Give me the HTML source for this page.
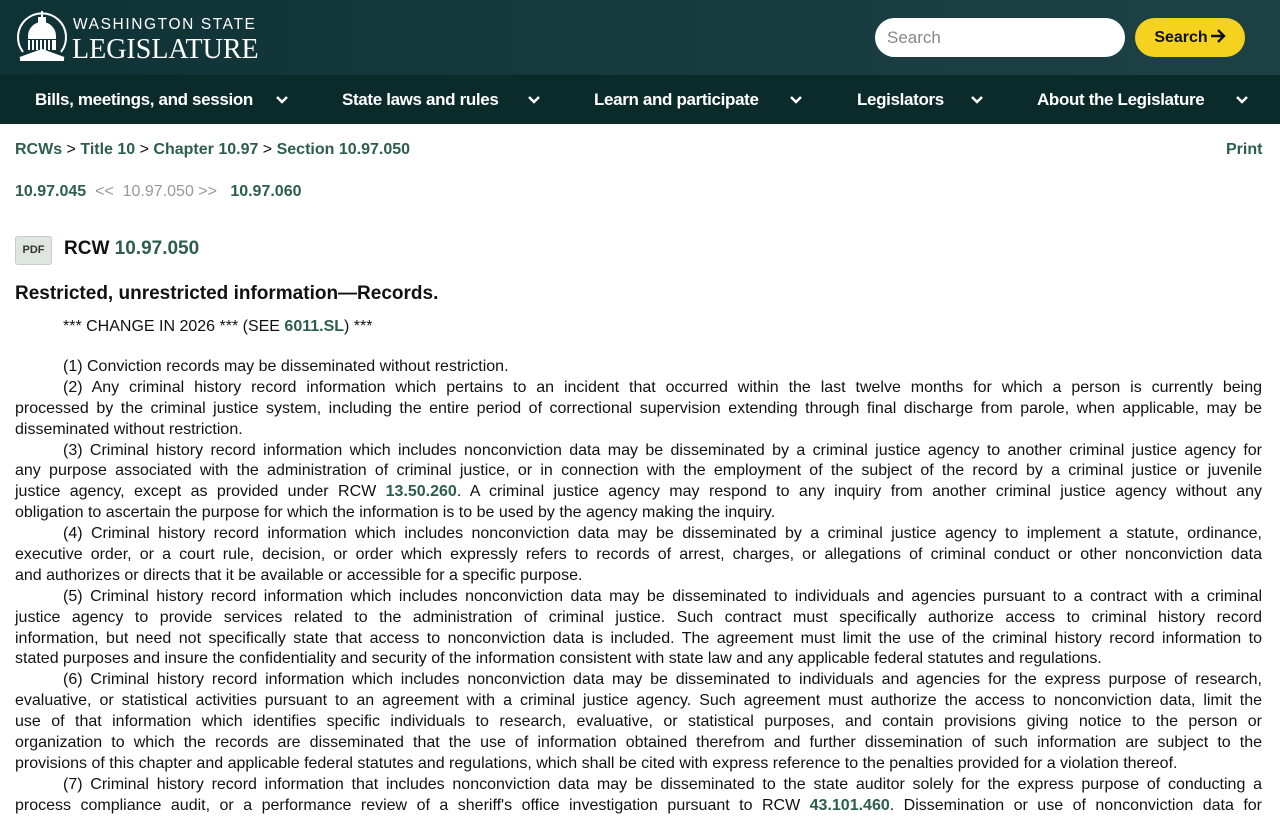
<!DOCTYPE html>
<html><head><meta charset="utf-8"><style>
body{margin:0;width:1280px;height:800px;overflow:hidden;background:#fff;font-family:"Liberation Sans",sans-serif;color:#111}
.top{height:75px;background:linear-gradient(90deg,#0f3335,#1d4145);position:relative}
.nav{height:49px;background:#0b2a2a;position:relative;color:#fff;font-weight:bold;font-size:17px;letter-spacing:-0.35px}
.nav span{position:absolute;top:15px}
.nav svg{position:absolute;top:20px}
.logo1{position:absolute;left:73px;top:16px;color:#fff;font-size:15.5px;letter-spacing:1.6px}
.logo2{position:absolute;left:72px;top:34px;color:#fff;font-family:"Liberation Serif",serif;font-size:28px;letter-spacing:0}
.search{position:absolute;left:875px;top:18px;width:250px;height:39px;background:#fff;border-radius:20px;color:#888;font-size:17px;line-height:39px;box-sizing:border-box;padding-left:12px}
.btn{position:absolute;left:1135px;top:18px;width:110px;height:39px;background:#f5d21f;border-radius:20px;font-weight:bold;font-size:16px;line-height:40px;text-align:center;color:#111}
a,.g{color:#2d5e4c;font-weight:bold;text-decoration:none}
.abs{position:absolute}
.body{position:absolute;left:15px;top:357px;width:1247px;font-size:16px;line-height:20.9px;color:#111}
.l{white-space:nowrap;text-align:justify;text-align-last:justify;height:20.9px;overflow:visible}
.e{text-align-last:left}
.i{padding-left:48px}
</style></head><body>
<div class="top">
<svg class="abs" style="left:14px;top:8px" width="56" height="56" viewBox="0 0 56 56" fill="none" stroke="#fff" stroke-width="2">
<path d="M9 44 A24 24 0 1 1 47 44"/>
<path d="M28 3v7M25 10h6v4h-6zM15 28a13 13 0 0 1 26 0z" fill="#fff"/>
<path d="M14 30h28M15 32v10M19 32v10M23 32v10M27 32v10M31 32v10M35 32v10M39 32v10M41 32v10"/>
<path d="M6 50l22-8 22 8z M6 52h44" fill="#fff"/>
</svg>
<div class="logo1">WASHINGTON STATE</div>
<div class="logo2">LEGISLATURE</div>
<div class="search">Search</div>
<div class="btn">Search<svg width="16" height="14" viewBox="0 0 16 14" style="vertical-align:-1px;margin-left:2px"><path d="M1 7h13M8 1l6 6-6 6" stroke="#111" stroke-width="2.4" fill="none"/></svg></div>
</div>
<div class="nav">
<span style="left:35px">Bills, meetings, and session</span>
<svg style="left:275px" width="14" height="10" viewBox="0 0 14 10"><path d="M2 2l5 5 5-5" stroke="#fff" stroke-width="2.5" fill="none"/></svg>
<span style="left:342px">State laws and rules</span>
<svg style="left:527px" width="14" height="10" viewBox="0 0 14 10"><path d="M2 2l5 5 5-5" stroke="#fff" stroke-width="2.5" fill="none"/></svg>
<span style="left:594px">Learn and participate</span>
<svg style="left:789px" width="14" height="10" viewBox="0 0 14 10"><path d="M2 2l5 5 5-5" stroke="#fff" stroke-width="2.5" fill="none"/></svg>
<span style="left:857px">Legislators</span>
<svg style="left:970px" width="14" height="10" viewBox="0 0 14 10"><path d="M2 2l5 5 5-5" stroke="#fff" stroke-width="2.5" fill="none"/></svg>
<span style="left:1037px">About the Legislature</span>
<svg style="left:1235px" width="14" height="10" viewBox="0 0 14 10"><path d="M2 2l5 5 5-5" stroke="#fff" stroke-width="2.5" fill="none"/></svg>
</div>
<div class="abs" style="left:15px;top:141px;font-size:16px"><a>RCWs</a> &gt; <a>Title 10</a> &gt; <a>Chapter 10.97</a> &gt; <a>Section 10.97.050</a></div>
<div class="abs" style="left:1226px;top:141px;font-size:16px"><a>Print</a></div>
<div class="abs" style="left:15px;top:183px;font-size:16px;color:#999"><a>10.97.045</a> &nbsp;&lt;&lt; &nbsp;10.97.050 &gt;&gt; &nbsp; <a>10.97.060</a></div>
<div class="abs" style="left:15px;top:236px;width:37px;height:29px;background:#dfe6e0;border:1px solid #c5cfc8;border-radius:3px;box-sizing:border-box;font-size:11px;font-weight:bold;color:#333;text-align:center;line-height:27px">PDF</div>
<div class="abs" style="left:64px;top:238px;font-size:19px;font-weight:bold">RCW <span class="g">10.97.050</span></div>
<div class="abs" style="left:15px;top:283px;font-size:19px;font-weight:bold">Restricted, unrestricted information—Records.</div>
<div class="abs" style="left:63px;top:318px;font-size:16px">*** CHANGE IN 2026 *** (SEE <a>6011.SL</a>) ***</div>
<div class="body">
<div class="l i e">(1) Conviction records may be disseminated without restriction.</div>
<div class="l i">(2) Any criminal history record information which pertains to an incident that occurred within the last twelve months for which a person is currently being</div>
<div class="l">processed by the criminal justice system, including the entire period of correctional supervision extending through final discharge from parole, when applicable, may be</div>
<div class="l e">disseminated without restriction.</div>
<div class="l i">(3) Criminal history record information which includes nonconviction data may be disseminated by a criminal justice agency to another criminal justice agency for</div>
<div class="l">any purpose associated with the administration of criminal justice, or in connection with the employment of the subject of the record by a criminal justice or juvenile</div>
<div class="l">justice agency, except as provided under RCW <a>13.50.260</a>. A criminal justice agency may respond to any inquiry from another criminal justice agency without any</div>
<div class="l e">obligation to ascertain the purpose for which the information is to be used by the agency making the inquiry.</div>
<div class="l i">(4) Criminal history record information which includes nonconviction data may be disseminated by a criminal justice agency to implement a statute, ordinance,</div>
<div class="l">executive order, or a court rule, decision, or order which expressly refers to records of arrest, charges, or allegations of criminal conduct or other nonconviction data</div>
<div class="l e">and authorizes or directs that it be available or accessible for a specific purpose.</div>
<div class="l i">(5) Criminal history record information which includes nonconviction data may be disseminated to individuals and agencies pursuant to a contract with a criminal</div>
<div class="l">justice agency to provide services related to the administration of criminal justice. Such contract must specifically authorize access to criminal history record</div>
<div class="l">information, but need not specifically state that access to nonconviction data is included. The agreement must limit the use of the criminal history record information to</div>
<div class="l e">stated purposes and insure the confidentiality and security of the information consistent with state law and any applicable federal statutes and regulations.</div>
<div class="l i">(6) Criminal history record information which includes nonconviction data may be disseminated to individuals and agencies for the express purpose of research,</div>
<div class="l">evaluative, or statistical activities pursuant to an agreement with a criminal justice agency. Such agreement must authorize the access to nonconviction data, limit the</div>
<div class="l">use of that information which identifies specific individuals to research, evaluative, or statistical purposes, and contain provisions giving notice to the person or</div>
<div class="l">organization to which the records are disseminated that the use of information obtained therefrom and further dissemination of such information are subject to the</div>
<div class="l e">provisions of this chapter and applicable federal statutes and regulations, which shall be cited with express reference to the penalties provided for a violation thereof.</div>
<div class="l i">(7) Criminal history record information that includes nonconviction data may be disseminated to the state auditor solely for the express purpose of conducting a</div>
<div class="l">process compliance audit, or a performance review of a sheriff's office investigation pursuant to RCW <a>43.101.460</a>. Dissemination or use of nonconviction data for</div>
</div>
</body></html>
